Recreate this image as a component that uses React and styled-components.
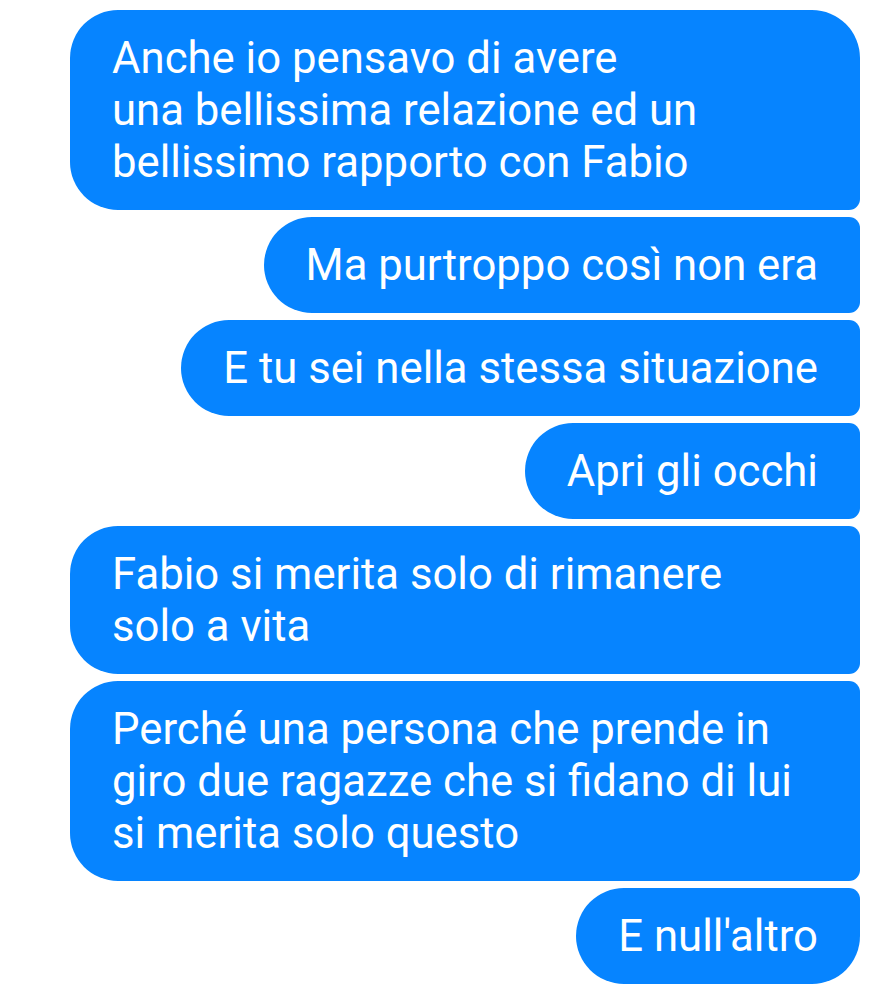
import React from 'react'
import styled, { createGlobalStyle } from 'styled-components'

const GlobalStyle = createGlobalStyle`
  body {
    margin: 0;
    background: #fff;
    font-family: Roboto, "Noto Sans", sans-serif;
  }
`

const Thread = styled.div`
  display: flex;
  flex-direction: column;
  align-items: flex-end;
  gap: 7px;
  padding: 10px 17px 7px 0;
  width: 877px;
  box-sizing: border-box;
`

const Bubble = styled.div`
  background: #0684ff;
  color: #fff;
  font-size: 43.7px;
  line-height: 52px;
  padding: 22px 42px 22px 42px;
  border-radius: 48px ${(p) => (p.first ? '48px' : '11px')} ${(p) => (p.last ? '48px' : '11px')} 48px;
  box-sizing: border-box;
  min-width: ${(p) => (p.wide ? '790px' : '0')};
`

const Line = styled.div`
  white-space: nowrap;
`

const messages = [
  { lines: ['Anche io pensavo di avere', 'una bellissima relazione ed un', 'bellissimo rapporto con Fabio'], wide: true },
  { lines: ['Ma purtroppo così non era'] },
  { lines: ['E tu sei nella stessa situazione'] },
  { lines: ['Apri gli occhi'] },
  { lines: ['Fabio si merita solo di rimanere', 'solo a vita'], wide: true },
  { lines: ['Perché una persona che prende in', 'giro due ragazze che si fidano di lui', 'si merita solo questo'], wide: true },
  { lines: ["E null'altro"] },
]

export default function App() {
  return (
    <>
      <GlobalStyle />
      <Thread>
        {messages.map((m, i) => (
          <Bubble key={i} wide={m.wide} first={i === 0} last={i === messages.length - 1}>
            {m.lines.map((l) => (
              <Line key={l}>{l}</Line>
            ))}
          </Bubble>
        ))}
      </Thread>
    </>
  )
}
